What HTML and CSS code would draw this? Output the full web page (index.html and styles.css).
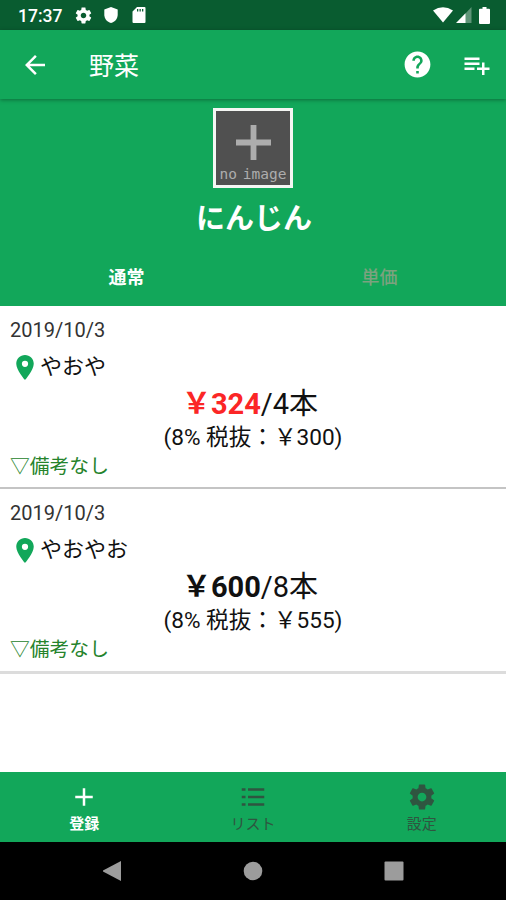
FILE: index.html
```
<!DOCTYPE html>
<html lang="ja">
<head>
    <meta charset="UTF-8">
    <meta name="viewport" content="width=device-width, initial-scale=1.0">
    <title>野菜</title>
    <link rel="stylesheet" href="styles.css">
</head>
<body>
    <div class="status-bar">
        <span class="clock">17:37</span>
        <svg class="status-gear" viewBox="0 0 24 24"><path d="M19.43 12.98c.04-.32.07-.64.07-.98s-.03-.66-.07-.98l2.11-1.65c.19-.15.24-.42.12-.64l-2-3.46c-.12-.22-.39-.3-.61-.22l-2.49 1c-.52-.4-1.08-.73-1.69-.98l-.38-2.65C14.46 2.18 14.25 2 14 2h-4c-.25 0-.46.18-.49.42l-.38 2.65c-.61.25-1.17.59-1.69.98l-2.49-1c-.23-.09-.49 0-.61.22l-2 3.46c-.13.22-.07.49.12.64l2.11 1.65c-.04.32-.07.65-.07.98s.03.66.07.98l-2.11 1.65c-.19.15-.24.42-.12.64l2 3.46c.12.22.39.3.61.22l2.49-1c.52.4 1.08.73 1.69.98l.38 2.65c.03.24.24.42.49.42h4c.25 0 .46-.18.49-.42l.38-2.65c.61-.25 1.17-.59 1.69-.98l2.49 1c.23.09.49 0 .61-.22l2-3.46c.12-.22.07-.49-.12-.64l-2.11-1.65zM12 15.5c-1.93 0-3.5-1.57-3.5-3.5s1.57-3.5 3.5-3.5 3.5 1.57 3.5 3.5-1.57 3.5-3.5 3.5z"/></svg>
        <svg class="status-shield" viewBox="0 0 14 16"><path d="M7 0L0.3 2.5V7.5C0.3 11.5 3 15 7 16C11 15 13.7 11.5 13.7 7.5V2.5Z"/></svg>
        <svg class="status-card" viewBox="0 0 14 16"><path fill-rule="evenodd" d="M5 0H12.5Q13.5 0 13.5 1V15Q13.5 16 12.5 16H1.5Q.5 16 .5 15V4.5ZM5 2V4.5H6.3V2ZM7.5 2V4.5H8.8V2ZM10 2V4.5H11.3V2Z"/></svg>
        <div class="status-right">
            <svg class="wifi" viewBox="0 0 20 16"><path d="M0 3.6Q10-3.2 20 3.6L10 15.5Z"/></svg>
            <svg class="signal" viewBox="0 0 16 16"><path opacity=".35" d="M9 7L15.5 0V16H9Z"/><path d="M0 16L9.5 6.2V16Z"/></svg>
            <svg class="battery" viewBox="0 0 11 17"><path d="M3.5 0H7.5V1.7H10Q11 1.7 11 2.7V16Q11 17 10 17H1Q0 17 0 16V2.7Q0 1.7 1 1.7H3.5Z"/></svg>
        </div>
    </div>

    <header class="app-bar">
        <svg class="icon-back" viewBox="0 0 24 24"><path d="M20 11H7.83l5.59-5.59L12 4l-8 8 8 8 1.41-1.41L7.83 13H20v-2z"/></svg>
        <h1>野菜</h1>
        <svg class="icon-help" viewBox="0 0 24 24"><path d="M12 2C6.48 2 2 6.48 2 12s4.48 10 10 10 10-4.48 10-10S17.52 2 12 2zm1 17h-2v-2h2v2zm2.07-7.75l-.9.92C13.45 12.9 13 13.5 13 15h-2v-.5c0-1.1.45-2.1 1.17-2.83l1.24-1.26c.37-.36.59-.86.59-1.41 0-1.1-.9-2-2-2s-2 .9-2 2H8c0-2.21 1.79-4 4-4s4 1.79 4 4c0 .88-.36 1.68-.93 2.25z"/></svg>
        <svg class="icon-add-list" viewBox="0 0 24 24"><path d="M14 10H2v2h12v-2zm0-4H2v2h12V6zm4 8v-4h-2v4h-4v2h4v4h2v-4h4v-2h-4zM2 16h8v-2H2v2z"/></svg>
    </header>

    <section class="product">
        <div class="no-image">
            <svg viewBox="0 0 36 36"><path d="M15 0H21V15H36V21H21V36H15V21H0V15H15Z"/></svg>
            <span>no image</span>
        </div>
        <h2>にんじん</h2>
        <div class="tabs">
            <a class="tab active">通常</a>
            <a class="tab">単価</a>
        </div>
    </section>

    <main class="price-list">
        <article class="price-item">
            <div class="date">2019/10/3</div>
            <div class="shop">
                <svg viewBox="0 0 14 20"><path d="M7 0C3.13 0 0 3.13 0 7c0 5.25 7 13 7 13s7-7.75 7-13c0-3.87-3.13-7-7-7zm0 9.5a2.5 2.5 0 1 1 0-5 2.5 2.5 0 0 1 0 5z"/></svg>
                <span>やおや</span>
            </div>
            <div class="price"><b class="cheapest">￥324</b>/4本</div>
            <div class="tax">(8% 税抜：￥300)</div>
            <div class="note">▽備考なし</div>
        </article>
        <article class="price-item last">
            <div class="date">2019/10/3</div>
            <div class="shop">
                <svg viewBox="0 0 14 20"><path d="M7 0C3.13 0 0 3.13 0 7c0 5.25 7 13 7 13s7-7.75 7-13c0-3.87-3.13-7-7-7zm0 9.5a2.5 2.5 0 1 1 0-5 2.5 2.5 0 0 1 0 5z"/></svg>
                <span>やおやお</span>
            </div>
            <div class="price"><b>￥600</b>/8本</div>
            <div class="tax">(8% 税抜：￥555)</div>
            <div class="note">▽備考なし</div>
        </article>
    </main>

    <nav class="bottom-nav">
        <a class="nav-item active">
            <svg viewBox="0 0 24 24"><path d="M19 13h-6v6h-2v-6H5v-2h6V5h2v6h6v2z"/></svg>
            <span>登録</span>
        </a>
        <a class="nav-item">
            <svg viewBox="0 0 24 24"><path d="M3 5h3v2H3zm0 6h3v2H3zm0 6h3v2H3zM8 5h13v2H8zm0 6h13v2H8zm0 6h13v2H8z"/></svg>
            <span>リスト</span>
        </a>
        <a class="nav-item">
            <svg viewBox="0 0 24 24"><path d="M19.43 12.98c.04-.32.07-.64.07-.98s-.03-.66-.07-.98l2.11-1.65c.19-.15.24-.42.12-.64l-2-3.46c-.12-.22-.39-.3-.61-.22l-2.49 1c-.52-.4-1.08-.73-1.69-.98l-.38-2.65C14.46 2.18 14.25 2 14 2h-4c-.25 0-.46.18-.49.42l-.38 2.65c-.61.25-1.17.59-1.69.98l-2.49-1c-.23-.09-.49 0-.61.22l-2 3.46c-.13.22-.07.49.12.64l2.11 1.65c-.04.32-.07.65-.07.98s.03.66.07.98l-2.11 1.65c-.19.15-.24.42-.12.64l2 3.46c.12.22.39.3.61.22l2.49-1c.52.4 1.08.73 1.69.98l.38 2.65c.03.24.24.42.49.42h4c.25 0 .46-.18.49-.42l.38-2.65c.61-.25 1.17-.59 1.69-.98l2.49 1c.23.09.49 0 .61-.22l2-3.46c.12-.22.07-.49-.12-.64l-2.11-1.65zM12 15.5c-1.93 0-3.5-1.57-3.5-3.5s1.57-3.5 3.5-3.5 3.5 1.57 3.5 3.5-1.57 3.5-3.5 3.5z"/></svg>
            <span>設定</span>
        </a>
    </nav>

    <div class="system-nav">
        <svg viewBox="0 0 20 20"><path d="M19 0V20L1 10.5V9.5Z"/></svg>
        <svg viewBox="0 0 20 20"><circle cx="10" cy="10" r="9.3"/></svg>
        <svg viewBox="0 0 20 20"><rect x=".5" y=".5" width="19" height="19" rx="1"/></svg>
    </div>
</body>
</html>
```
FILE: styles.css
```
* {
    box-sizing: border-box;
}

body {
    margin: 0;
    height: 900px;
    display: flex;
    flex-direction: column;
    overflow: hidden;
    background: #fff;
    color: #111;
    font-family: Roboto, "Noto Sans CJK JP", sans-serif;
}

svg {
    display: block;
    flex: none;
    fill: currentColor;
}

h1, h2 {
    margin: 0;
}

/* status bar */
.status-bar {
    flex: none;
    height: 30px;
    padding: 0 16px 0 18px;
    display: flex;
    align-items: center;
    background: #095c30;
    color: #fff;
}

.clock {
    width: 56px;
    font-size: 17.5px;
    font-weight: 500;
    line-height: 30px;
    padding-top: 2px;
}

.status-gear {
    width: 19px;
    height: 19px;
    margin-right: 11px;
}

.status-shield {
    width: 14px;
    height: 16px;
    margin-right: 14px;
}

.status-card {
    width: 14px;
    height: 16px;
}

.status-right {
    margin-left: auto;
    display: flex;
    align-items: center;
}

.wifi {
    width: 20px;
    height: 16px;
    margin-right: 3px;
}

.signal {
    width: 16px;
    height: 16px;
    margin-right: 7px;
}

.battery {
    width: 11px;
    height: 17px;
}

/* app bar */
.app-bar {
    flex: none;
    height: 69px;
    padding: 0 14px 0 20px;
    display: flex;
    align-items: center;
    background: #12a75a;
    color: #fff;
    box-shadow: 0 1px 4px rgba(0, 0, 0, 0.35);
    z-index: 1;
}

.app-bar h1 {
    flex: 1;
    margin-left: 39px;
    padding-top: 4px;
    font-size: 25px;
    font-weight: 400;
    line-height: 36px;
}

.icon-back {
    width: 30px;
    height: 30px;
}

.icon-help {
    width: 31px;
    height: 31px;
    margin-right: 29px;
}

.icon-add-list {
    width: 30px;
    height: 30px;
}

/* product header */
.product {
    flex: none;
    height: 207px;
    padding-top: 9px;
    display: flex;
    flex-direction: column;
    align-items: center;
    background: #12a75a;
    color: #fff;
}

.no-image {
    flex: none;
    width: 80px;
    height: 80px;
    border: 3px solid #f4f6f3;
    padding-top: 14px;
    display: flex;
    flex-direction: column;
    align-items: center;
    background: #505050;
    color: #adadad;
}

.no-image svg {
    width: 35px;
    height: 35px;
}

.no-image span {
    margin-top: 4px;
    font-family: "DejaVu Sans Mono", monospace;
    font-size: 14.5px;
    line-height: 20px;
    word-spacing: -3px;
    white-space: nowrap;
}

.product h2 {
    margin-top: 10px;
    padding-left: 2px;
    font-size: 29px;
    font-weight: 700;
    line-height: 42px;
}

.tabs {
    width: 100%;
    display: flex;
    margin-top: 10px;
}

.tab {
    flex: 1;
    text-align: center;
    font-size: 18px;
    font-weight: 500;
    line-height: 56px;
    color: #7ba27f;
}

.tab.active {
    color: #fff;
    font-weight: 700;
}

/* price records */
.price-list {
    flex: 1;
}

.price-item {
    height: 183px;
    padding: 9px 10px 0;
    border-bottom: 2px solid #c4c4c4;
}

.price-item.last {
    height: 185px;
    border-bottom: 3px solid #dcdcdc;
}

.date {
    font-size: 20px;
    line-height: 31px;
    color: #333;
}

.shop {
    display: flex;
    align-items: center;
    height: 42px;
    padding-left: 6px;
    font-size: 22px;
    line-height: 30px;
}

.shop svg {
    width: 18px;
    height: 25px;
    margin-right: 6px;
    color: #12a75a;
}

.price {
    padding: 1px 6px 0 0;
    text-align: center;
    font-size: 29px;
    line-height: 30px;
}

.price b {
    font-weight: 700;
}

.cheapest {
    color: #fb2626;
}

.tax {
    text-align: center;
    padding-top: 1px;
    font-size: 22.6px;
    line-height: 36px;
}

.note {
    font-size: 19.8px;
    line-height: 22px;
    color: #25832b;
}

/* bottom navigation */
.bottom-nav {
    flex: none;
    height: 70px;
    display: flex;
    background: #12a75a;
}

.nav-item {
    flex: 1;
    display: flex;
    flex-direction: column;
    align-items: center;
    padding-top: 10px;
    font-size: 15px;
    line-height: 24px;
    color: #2f5540;
}

.nav-item svg {
    width: 30px;
    height: 30px;
}

.nav-item.active {
    color: #fff;
    font-weight: 700;
}

/* android buttons */
.system-nav {
    flex: none;
    height: 58px;
    padding: 0 102px;
    display: flex;
    justify-content: space-between;
    align-items: center;
    background: #000;
    color: #9c9c9c;
}

.system-nav svg {
    width: 20px;
    height: 20px;
}
```
